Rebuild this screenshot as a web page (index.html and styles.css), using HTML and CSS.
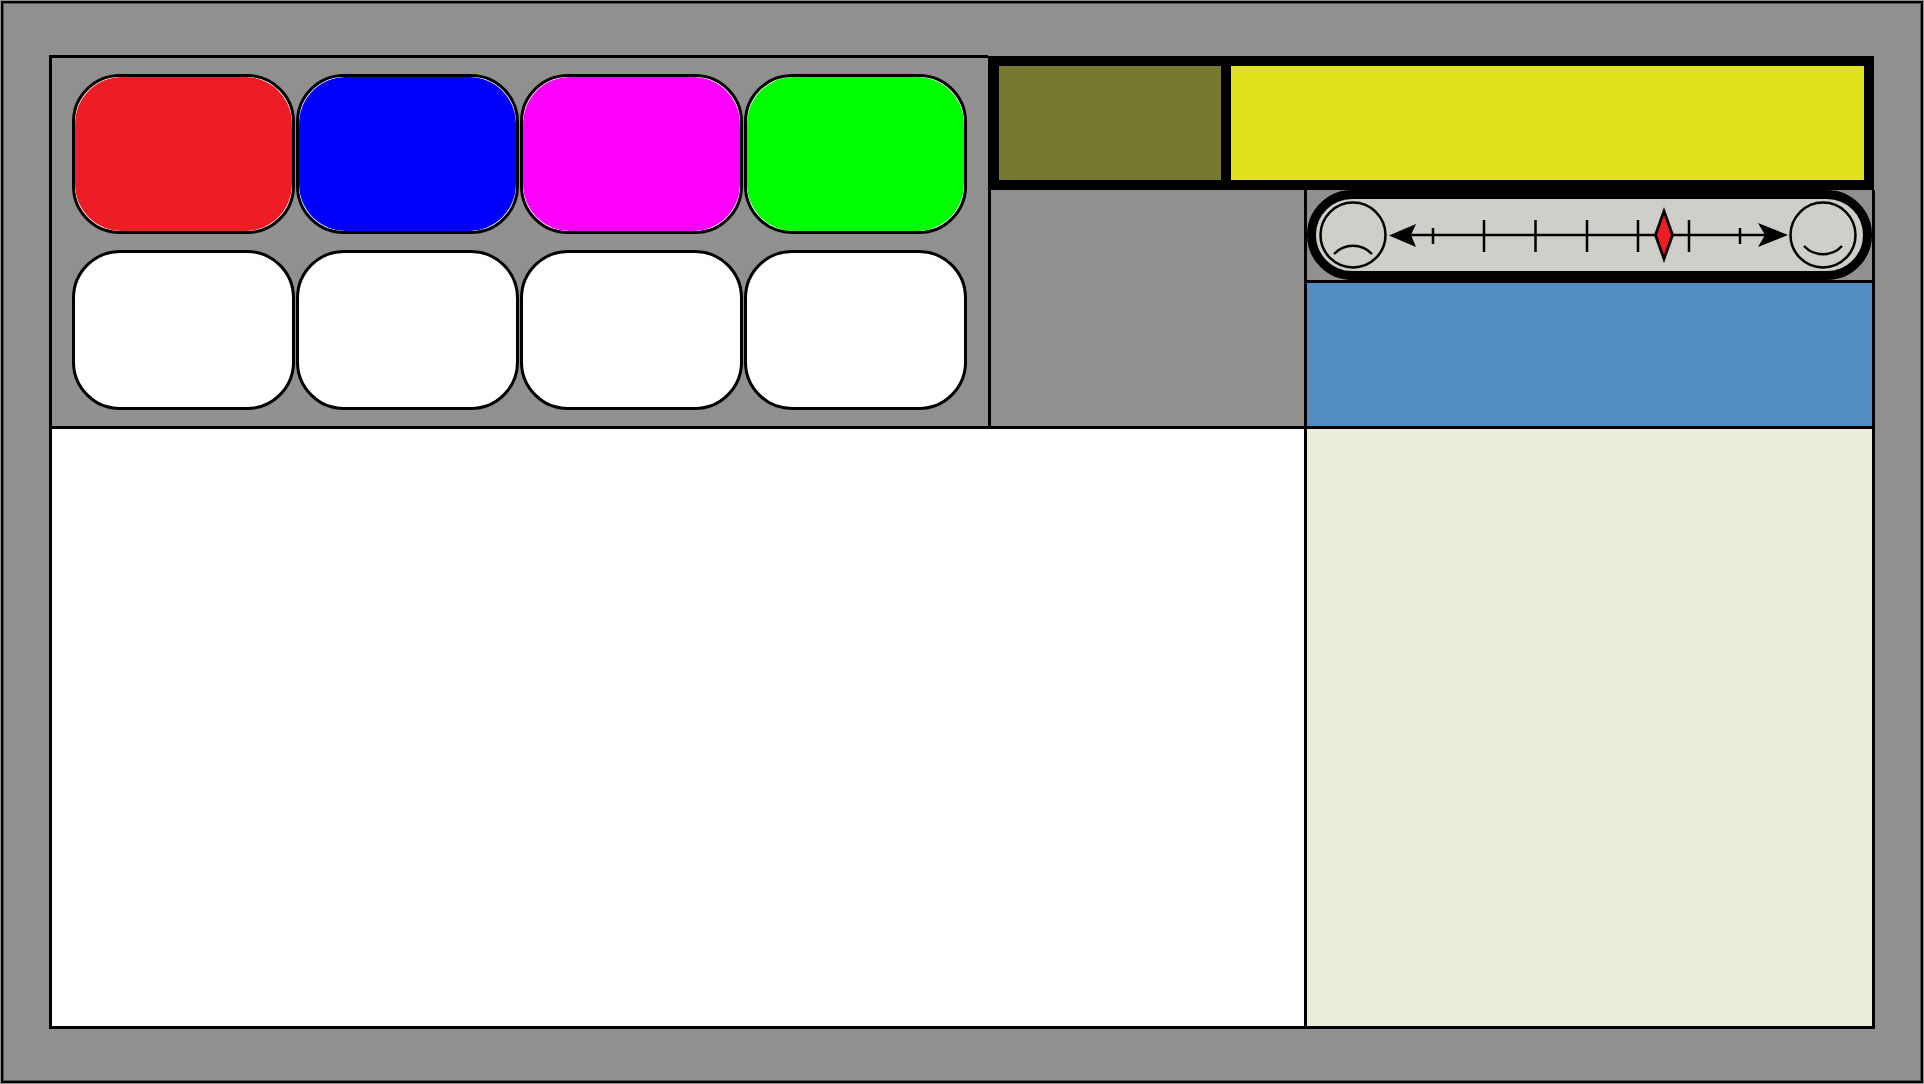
FILE: index.html
```html
<!DOCTYPE html>
<html lang="en">
<head>
<meta charset="utf-8">
<meta name="viewport" content="width=device-width, initial-scale=1">
<title>Console</title>
<link rel="stylesheet" href="styles.css">
</head>
<body>
<main class="frame">
  <div class="board">
    <section class="top">
      <div class="palette">
        <button class="swatch red" type="button" aria-label="Red"></button>
        <button class="swatch blue" type="button" aria-label="Blue"></button>
        <button class="swatch magenta" type="button" aria-label="Magenta"></button>
        <button class="swatch green" type="button" aria-label="Green"></button>
        <button class="swatch" type="button" aria-label="Empty 1"></button>
        <button class="swatch" type="button" aria-label="Empty 2"></button>
        <button class="swatch" type="button" aria-label="Empty 3"></button>
        <button class="swatch" type="button" aria-label="Empty 4"></button>
      </div>
      <div class="status">
        <div class="meter">
          <div class="meter-used"></div>
          <div class="meter-rest"></div>
        </div>
        <div class="status-lower">
          <div class="spare"></div>
          <div class="side">
            <div class="mood-row">
              <div class="mood">
                <svg class="face" viewBox="0 0 72 72" aria-hidden="true">
                  <circle cx="36" cy="36" r="32.500"/>
                  <path d="M17 55A26 26 0 0 1 55 55"/>
                </svg>
                <div class="scale">
                  <svg class="ruler" viewBox="0 0 398 72" aria-hidden="true">
                    <path class="axis" d="M20 36H378"/>
                    <path class="ticks" d="M44 29V45M95 21V53M146.500 21V53M198 21V53M249 21V53M300 21V53M351 29V45"/>
                    <path class="tip" d="M0 36.500L27 25L22 36L27 48ZM399 36L369 24L376 36L369 48Z"/>
                  </svg>
                  <input class="slider" type="range" min="0" max="6" step="0.1" value="4.5" aria-label="Mood">
                </div>
                <svg class="face" viewBox="0 0 72 72" aria-hidden="true">
                  <circle cx="36" cy="36" r="32.500"/>
                  <path d="M17 47A26 26 0 0 0 55 47"/>
                </svg>
              </div>
            </div>
            <div class="banner"></div>
          </div>
        </div>
      </div>
    </section>
    <section class="bottom">
      <div class="canvas"></div>
      <aside class="notes"></aside>
    </section>
  </div>
</main>
</body>
</html>
```
FILE: styles.css
```css
:root {
  --gray: #90908e;
  --line: 3px solid #000;
  --soft: rgba(0, 0, 0, 0.4);
}

* {
  box-sizing: border-box;
}

body {
  margin: 0;
  background: var(--gray);
  font-family: "Liberation Sans", Arial, sans-serif;
}

.frame {
  display: flex;
  min-height: 100vh;
  padding: 52px 46px;
  border: 3px solid transparent;
  outline: 2px solid #000;
  outline-offset: -3px;
  box-shadow: inset 0 0 0 1px var(--soft);
}

.board {
  display: flex;
  flex-direction: column;
  flex: 1;
  min-width: 0;
}

.top {
  display: grid;
  grid-template-columns: 939fr 887fr;
  border-bottom: var(--line);
}

.palette {
  display: grid;
  grid-template-columns: repeat(4, 1fr);
  grid-template-rows: repeat(2, 160px);
  gap: 16px 1px;
  padding: 16px 21px 16px 20px;
  border-top: var(--line);
  border-left: var(--line);
}

.swatch {
  display: flex;
  padding: 0;
  border: 3px solid #000;
  border-radius: 48px;
  background: #fff;
  overflow: hidden;
}

.swatch::before {
  content: "";
  flex: 1;
  align-self: stretch;
  border-radius: 47px;
}

.red::before { background: #ee1c25; }
.blue::before { background: #00f; }
.magenta::before { background: #f0f; }
.green::before { background: #0f0; }

.status {
  display: flex;
  flex-direction: column;
  padding-top: 1px;
}

.meter {
  display: grid;
  grid-template-columns: 222fr 633fr;
  gap: 10px;
  height: 134px;
  margin-right: 1px;
  border: 10px solid #000;
  border-left-width: 11px;
  background: #000;
}

.meter-used { background: #777831; }
.meter-rest { background: #e0e31b; }

.status-lower {
  display: grid;
  grid-template-columns: 316fr 571fr;
  flex: 1;
}

.spare {
  border-left: var(--line);
}

.side {
  display: flex;
  flex-direction: column;
  border-left: var(--line);
  border-right: var(--line);
}

.mood-row {
  border-bottom: var(--line);
}

.mood {
  display: flex;
  height: 90px;
  padding: 0 4px 0 1px;
  border: 9px solid #000;
  border-radius: 45px;
  background: #cfcec8;
}

.face {
  flex: none;
  width: 72px;
  height: 72px;
  fill: none;
  stroke: #000;
  stroke-width: 2.5;
}

.scale {
  display: grid;
  grid-template-columns: 34fr 328fr 36fr;
  flex: 1;
  min-width: 0;
}

.ruler {
  grid-area: 1 / 1 / 2 / 4;
  width: 100%;
  height: 72px;
  overflow: visible;
}

.axis {
  stroke: #000;
  stroke-width: 2.5;
}

.ticks {
  stroke: #000;
  stroke-width: 2.5;
}

.slider {
  grid-area: 1 / 2 / 2 / 3;
  width: 100%;
  height: 72px;
  margin: 0;
  background: transparent;
  appearance: none;
}

.slider::-webkit-slider-thumb {
  appearance: none;
  width: 20px;
  height: 56px;
  border: 0;
  background: url("data:image/svg+xml,%3Csvg xmlns='http://www.w3.org/2000/svg' viewBox='0 0 20 56'%3E%3Cpath d='M10 0L20 28L10 56L0 28Z'/%3E%3Cpath d='M10 8L17 28L10 48L3 28Z' fill='%23ee1c25'/%3E%3C/svg%3E") center / 20px 56px no-repeat;
}

.banner {
  flex: 1;
  background: #548dc3;
}

.bottom {
  display: grid;
  grid-template-columns: 1255fr 571fr;
  flex: 1;
  border-bottom: var(--line);
}

.canvas {
  border-left: var(--line);
  background: #fff;
}

.notes {
  border-left: var(--line);
  border-right: var(--line);
  background: #ecedda;
}
```
